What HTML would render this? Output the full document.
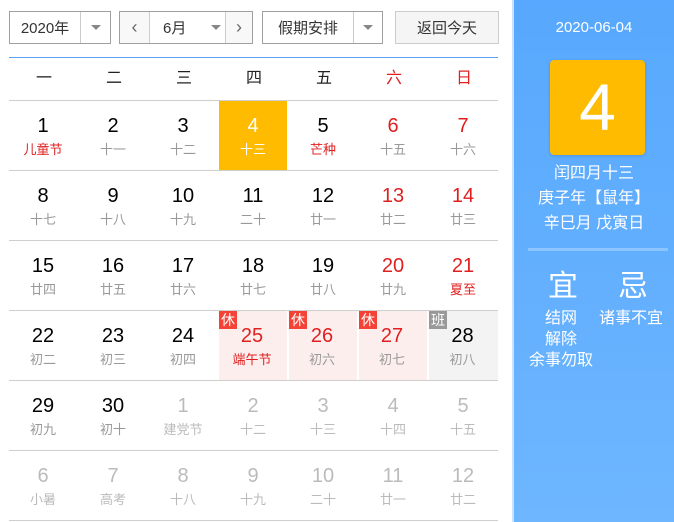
<!DOCTYPE html><html><head><meta charset="utf-8"><style>
*{margin:0;padding:0;box-sizing:border-box}
body{width:674px;height:522px;background:#fff;font-family:"Liberation Sans","Noto Sans CJK SC",sans-serif;position:relative;overflow:hidden;color:#000}
.ab{position:absolute}
.sel{position:absolute;top:11px;height:33px;border:1px solid #a0a0a0;font-size:15px;color:#333;display:flex;align-items:center}
.tri{width:0;height:0;border-left:5px solid transparent;border-right:5px solid transparent;border-top:5px solid #888}
.wk{position:absolute;top:57px;height:43px;width:70px;text-align:center;line-height:43px;font-size:16px;color:#222}
.hl{position:absolute;left:9px;width:489px;height:1px;background:#cfcfcf}
.c{position:absolute;width:70px;height:70px;text-align:center}
.c .n{position:absolute;top:13px;width:100%;font-size:20px;line-height:24px}
.c .l{position:absolute;top:40px;width:100%;font-size:13px;line-height:18px;color:#999}
.r{color:#e02020!important}.g{color:#bbb!important}
.tag{position:absolute;left:0;top:0;width:18px;height:18px;color:#fff;font-size:14px;line-height:18px;text-align:center}
.rp{position:absolute;left:512px;top:0;width:162px;height:522px;background:linear-gradient(#57a8fe,#6eb6ff);border-left:2px solid #c9e2ff;color:#fff;text-align:center}
</style></head><body>
<div class="sel" style="left:9px;width:102px"><span style="width:70px;text-align:center">2020年</span><span style="width:1px;height:31px;background:#ccc"></span><span style="flex:1;display:flex;justify-content:center"><i class="tri"></i></span></div>
<div class="sel" style="left:119px;width:134px;background:#f8f8f8"><span style="width:29px;text-align:center;font-size:18px;color:#666">‹</span><span style="width:1px;height:31px;background:#ccc"></span><span style="width:75px;background:#fff;height:31px;display:flex;align-items:center;padding-left:13px">6月<i class="tri" style="margin-left:25px"></i></span><span style="width:1px;height:31px;background:#ccc"></span><span style="flex:1;text-align:center;font-size:18px;color:#666">›</span></div>
<div class="sel" style="left:262px;width:121px"><span style="width:90px;text-align:center">假期安排</span><span style="width:1px;height:31px;background:#ccc"></span><span style="flex:1;display:flex;justify-content:center"><i class="tri"></i></span></div>
<div class="sel" style="left:395px;width:104px;border-color:#ccc;background:#f5f5f5;justify-content:center">返回今天</div>
<div class="ab" style="left:9px;top:57px;width:489px;height:1px;background:#5a9ff0"></div>
<div class="wk" style="left:9px">一</div><div class="wk" style="left:79px">二</div><div class="wk" style="left:149px">三</div><div class="wk" style="left:219px">四</div><div class="wk" style="left:289px">五</div><div class="wk r" style="left:359px">六</div><div class="wk r" style="left:429px">日</div>
<div class="hl" style="top:100px"></div><div class="hl" style="top:170px"></div><div class="hl" style="top:240px"></div><div class="hl" style="top:310px"></div><div class="hl" style="top:380px"></div><div class="hl" style="top:450px"></div><div class="hl" style="top:520px"></div>
<div class="c" style="left:8px;top:101px"><div class="n">1</div><div class="l r">儿童节</div></div>
<div class="c" style="left:78px;top:101px"><div class="n">2</div><div class="l">十一</div></div>
<div class="c" style="left:148px;top:101px"><div class="n">3</div><div class="l">十二</div></div>
<div class="c" style="left:219px;top:101px;width:68px;height:69px;background:#ffbb00;color:#fff"><div class="n">4</div><div class="l" style="color:#fff">十三</div></div>
<div class="c" style="left:288px;top:101px"><div class="n">5</div><div class="l r">芒种</div></div>
<div class="c r" style="left:358px;top:101px"><div class="n">6</div><div class="l">十五</div></div>
<div class="c r" style="left:428px;top:101px"><div class="n">7</div><div class="l">十六</div></div>
<div class="c" style="left:8px;top:171px"><div class="n">8</div><div class="l">十七</div></div>
<div class="c" style="left:78px;top:171px"><div class="n">9</div><div class="l">十八</div></div>
<div class="c" style="left:148px;top:171px"><div class="n">10</div><div class="l">十九</div></div>
<div class="c" style="left:218px;top:171px"><div class="n">11</div><div class="l">二十</div></div>
<div class="c" style="left:288px;top:171px"><div class="n">12</div><div class="l">廿一</div></div>
<div class="c r" style="left:358px;top:171px"><div class="n">13</div><div class="l">廿二</div></div>
<div class="c r" style="left:428px;top:171px"><div class="n">14</div><div class="l">廿三</div></div>
<div class="c" style="left:8px;top:241px"><div class="n">15</div><div class="l">廿四</div></div>
<div class="c" style="left:78px;top:241px"><div class="n">16</div><div class="l">廿五</div></div>
<div class="c" style="left:148px;top:241px"><div class="n">17</div><div class="l">廿六</div></div>
<div class="c" style="left:218px;top:241px"><div class="n">18</div><div class="l">廿七</div></div>
<div class="c" style="left:288px;top:241px"><div class="n">19</div><div class="l">廿八</div></div>
<div class="c r" style="left:358px;top:241px"><div class="n">20</div><div class="l">廿九</div></div>
<div class="c r" style="left:428px;top:241px"><div class="n">21</div><div class="l r">夏至</div></div>
<div class="c" style="left:8px;top:311px"><div class="n">22</div><div class="l">初二</div></div>
<div class="c" style="left:78px;top:311px"><div class="n">23</div><div class="l">初三</div></div>
<div class="c" style="left:148px;top:311px"><div class="n">24</div><div class="l">初四</div></div>
<div class="c" style="left:219px;top:311px;width:68px;height:69px;background:#fdeeee"><span class="tag" style="background:#f44336">休</span><div class="n r" style="left:-1px">25</div><div class="l r" style="left:-1px">端午节</div></div>
<div class="c" style="left:289px;top:311px;width:68px;height:69px;background:#fdeeee"><span class="tag" style="background:#f44336">休</span><div class="n r" style="left:-1px">26</div><div class="l" style="left:-1px">初六</div></div>
<div class="c" style="left:359px;top:311px;width:68px;height:69px;background:#fdeeee"><span class="tag" style="background:#f44336">休</span><div class="n r" style="left:-1px">27</div><div class="l" style="left:-1px">初七</div></div>
<div class="c" style="left:429px;top:311px;width:69px;height:69px;background:#f3f3f3"><span class="tag" style="background:#999">班</span><div class="n" style="left:-1px">28</div><div class="l" style="left:-1px">初八</div></div>
<div class="c" style="left:8px;top:381px"><div class="n">29</div><div class="l">初九</div></div>
<div class="c" style="left:78px;top:381px"><div class="n">30</div><div class="l">初十</div></div>
<div class="c g" style="left:148px;top:381px"><div class="n">1</div><div class="l g">建党节</div></div>
<div class="c g" style="left:218px;top:381px"><div class="n">2</div><div class="l g">十二</div></div>
<div class="c g" style="left:288px;top:381px"><div class="n">3</div><div class="l g">十三</div></div>
<div class="c g" style="left:358px;top:381px"><div class="n">4</div><div class="l g">十四</div></div>
<div class="c g" style="left:428px;top:381px"><div class="n">5</div><div class="l g">十五</div></div>
<div class="c g" style="left:8px;top:451px"><div class="n">6</div><div class="l g">小暑</div></div>
<div class="c g" style="left:78px;top:451px"><div class="n">7</div><div class="l g">高考</div></div>
<div class="c g" style="left:148px;top:451px"><div class="n">8</div><div class="l g">十八</div></div>
<div class="c g" style="left:218px;top:451px"><div class="n">9</div><div class="l g">十九</div></div>
<div class="c g" style="left:288px;top:451px"><div class="n">10</div><div class="l g">二十</div></div>
<div class="c g" style="left:358px;top:451px"><div class="n">11</div><div class="l g">廿一</div></div>
<div class="c g" style="left:428px;top:451px"><div class="n">12</div><div class="l g">廿二</div></div>
<div class="rp">
<div class="ab" style="left:0;width:160px;top:19px;font-size:15px;line-height:18px">2020-06-04</div>
<div class="ab" style="left:36px;top:60px;width:95px;height:95px;background:#ffbb00;border-radius:4px;font-size:66px;line-height:95px;box-shadow:0 1px 3px rgba(0,0,0,.15)">4</div>
<div class="ab" style="left:0;width:160px;top:164px;font-size:16px;line-height:20px">闰四月十三</div>
<div class="ab" style="left:0;width:160px;top:189px;font-size:16px;line-height:20px">庚子年【鼠年】</div>
<div class="ab" style="left:0;width:160px;top:214px;font-size:16px;line-height:20px">辛巳月 戊寅日</div>
<div class="ab" style="left:14px;top:248px;width:140px;height:3px;background:#8cc4ff"></div>
<div class="ab" style="left:34px;top:269px;font-size:30px;line-height:36px">宜</div>
<div class="ab" style="left:104px;top:269px;font-size:30px;line-height:36px">忌</div>
<div class="ab" style="left:31px;top:309px;font-size:16px;line-height:20px">结网</div>
<div class="ab" style="left:31px;top:330px;font-size:16px;line-height:20px">解除</div>
<div class="ab" style="left:15px;top:351px;font-size:16px;line-height:20px">余事勿取</div>
<div class="ab" style="left:85px;top:309px;font-size:16px;line-height:20px">诸事不宜</div>
</div>
</body></html>
